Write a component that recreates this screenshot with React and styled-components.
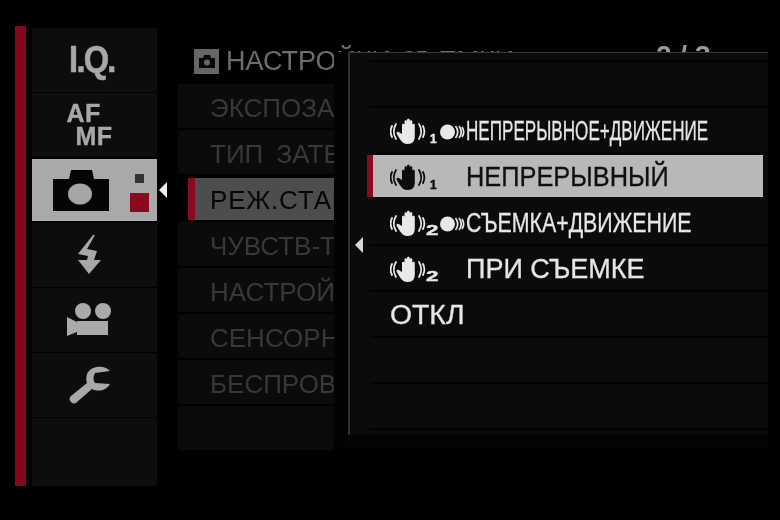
import React from 'react';
import styled, { createGlobalStyle } from 'styled-components';

const MENU = ['ЭКСПОЗАМЕР', 'ТИП ЗАТВОРА', 'РЕЖ.СТАБИЛИЗАТОРА', 'ЧУВСТВ-ТЬ', 'НАСТРОЙКА', 'СЕНСОРНЫЙ', 'БЕСПРОВОДНОЙ', ''];

const MODES = [
  {},
  { num: '1', subject: true, label: 'НЕПРЕРЫВНОЕ+ДВИЖЕНИЕ', scale: 0.633 },
  { num: '1', label: 'НЕПРЕРЫВНЫЙ', selected: true, scale: 0.94 },
  { num: '2', subject: true, label: 'СЪЕМКА+ДВИЖЕНИЕ', scale: 0.79 },
  { num: '2', label: 'ПРИ СЪЕМКЕ', scale: 1 },
  { label: 'ОТКЛ', plain: true, scale: 1.05 },
  {},
  {},
];

const App = () => {
  return (
    <Screen>
      <GlobalStyle />
      <RedBar />
      <Sidebar>
        <Tab><IQ>I.Q.</IQ></Tab>
        <Tab>
          <AfMf>
            <span>AF</span>
            <MfLine>MF</MfLine>
          </AfMf>
        </Tab>
        <Tab $active>
          <CameraIcon />
          <TabMarks>
            <SmallMark />
            <RedMark />
          </TabMarks>
          <TabArrow />
        </Tab>
        <Tab><FlashIcon /></Tab>
        <Tab><VideoIcon /></Tab>
        <Tab><WrenchIcon /></Tab>
        <Tab $last />
      </Sidebar>
      <Main>
        <TitleRow>
          <TitleIcon />
          <Title>НАСТРОЙКИ СЪЕМКИ</Title>
          <PageNo>2 / 3</PageNo>
        </TitleRow>
        <MenuList>
          {MENU.map((item, i) => (
            <MenuRow key={i} $selected={i === 2}>
              {item}
            </MenuRow>
          ))}
        </MenuList>
      </Main>
      <Popup>
        <PopupArrow />
        <PopupList>
          {MODES.map((m, i) => (
            <ModeRow key={i} $selected={m.selected}>
              {m.num && (
                <IconSlot>
                  <HandIcon color={m.selected ? '#0c0c0c' : '#e8e8e8'} />
                  <Sub $two={m.num === '2'} $selected={m.selected}>{m.num}</Sub>
                  {m.subject && <SubjectIcon />}
                </IconSlot>
              )}
              {m.label && (
                <ModeLabel $selected={m.selected} $scale={m.scale}>
                  {m.label}
                </ModeLabel>
              )}
            </ModeRow>
          ))}
        </PopupList>
      </Popup>
    </Screen>
  );
};

export default App;

const CameraIcon = () => (
  <svg width="56" height="41" viewBox="0 0 56 41">
    <path d="M0 9h16l2-9h21l2 9h15v32H0z" fill="#050505" />
    <ellipse cx="27" cy="24" rx="12" ry="10.500" fill="#a6a6a6" />
  </svg>
);

const TitleCamera = () => (
  <svg width="16" height="13" viewBox="0 0 16 13">
    <path d="M0 3h4l1-3h6l1 3h4v10H0z" fill="#0a0a0a" />
    <circle cx="8" cy="7.500" r="3" fill="#666" />
  </svg>
);

const TitleIcon = () => (
  <TitleIconBox>
    <TitleCamera />
  </TitleIconBox>
);

const FlashIcon = () => (
  <svg width="24" height="40" viewBox="0 0 24 40">
    <path d="M15 0L0 19l10 2-1 4H0l11 14 12-14h-7l3-9-10-2 8-14z" fill="#a8a8a8" />
  </svg>
);

const VideoIcon = () => (
  <svg width="45" height="34" viewBox="0 0 45 34">
    <circle cx="16" cy="8" r="8" fill="#aaa" />
    <circle cx="36" cy="8" r="8" fill="#aaa" />
    <path d="M10 18h31v14H10v-3L0 33V14l10 5z" fill="#aaa" />
  </svg>
);

const WrenchIcon = () => (
  <svg width="42" height="38" viewBox="0 0 42 38">
    <path
      d="M41 5C36-1 22-1 18 8c-1 4-1 6 0 9L2 30c-2 2-2 4 0 6s4 2 6 0l15-13c6 3 14 2 18-5l-15-1c-2-3-2-6 0-10z"
      fill="#a8a8a8"
    />
  </svg>
);

const HandIcon = ({ color }) => (
  <svg width="36" height="27" viewBox="0 0 36 27">
    <g fill="none" stroke={color} strokeWidth="1.800" strokeLinecap="round">
      <path d="M6 6c-3 5-3 10 0 15" />
      <path d="M2 8c-2 4-2 7 0 11" />
      <path d="M29 6c3 5 3 10 0 15" />
      <path d="M33 8c2 4 2 7 0 11" />
    </g>
    <path
      transform="translate(4 0)"
      d="M8 16V7c0-1.600 2.500-1.600 2.500 0v5-8.500c0-1.600 2.500-1.600 2.500 0V12V2c0-1.600 2.800-1.600 2.800 0v10-8.500c0-1.600 2.500-1.600 2.500 0V13V7c0-1.600 2.500-1.600 2.500 0v11c0 5-2 8-7 8-4 0-6-2-8-5l-3-5c-1-2 1-3 2.700-1.500z"
      fill={color}
    />
  </svg>
);

const SubjectIcon = () => (
  <SubjectSvg width="26" height="16" viewBox="0 0 26 16">
    <circle cx="7.500" cy="8" r="7.500" fill="#e8e8e8" />
    <g fill="none" stroke="#e8e8e8" strokeWidth="1.700">
      <path d="M15.500 2c3 4 3 8 0 12" />
      <path d="M19 2c3 4 3 8 0 12" />
      <path d="M22 3c2 3 2 7 0 10" />
    </g>
  </SubjectSvg>
);

const GlobalStyle = createGlobalStyle`
  html, body {
    margin: 0;
    padding: 0;
    background: #000;
  }
  body {
    font-family: "Liberation Sans", Arial, sans-serif;
  }
`;

const Screen = styled.div`
  position: relative;
  display: flex;
  align-items: flex-start;
  width: 780px;
  height: 520px;
  padding-left: 15px;
  box-sizing: border-box;
  overflow: hidden;
  background: #010101;
  filter: blur(0.5px);
`;

const RedBar = styled.div`
  flex: none;
  width: 11px;
  height: 460px;
  margin-top: 26px;
  background: #85061f;
`;

const Sidebar = styled.div`
  flex: none;
  display: flex;
  flex-direction: column;
  gap: 1px;
  width: 125px;
  height: 458px;
  margin: 28px 0 0 6px;
`;

const Tab = styled.div`
  position: relative;
  flex: ${(p) => (p.$last ? '1' : 'none')};
  display: flex;
  align-items: center;
  justify-content: center;
  box-sizing: border-box;
  height: ${(p) => (p.$active ? '62px' : p.$last ? 'auto' : '64px')};
  margin: ${(p) => (p.$active ? '1px 0' : '0')};
  padding-right: ${(p) => (p.$active ? '28px' : '10px')};
  background: ${(p) => (p.$active ? '#a9a9a9' : '#0d0d0d')};
`;

const IQ = styled.div`
  margin-left: 4px;
  font-size: 37px;
  font-weight: 700;
  color: #a8a8a8;
  letter-spacing: -2px;
  -webkit-text-stroke: 0.6px #a8a8a8;
  transform: scaleX(0.88);
`;

const AfMf = styled.div`
  display: flex;
  flex-direction: column;
  font-size: 25px;
  font-weight: 700;
  line-height: 23px;
  letter-spacing: 0.5px;
  color: #a8a8a8;
  -webkit-text-stroke: 0.4px #a8a8a8;
`;

const MfLine = styled.span`
  margin-left: 9px;
`;

const TabMarks = styled.div`
  position: absolute;
  top: 15px;
  right: 8px;
  display: flex;
  flex-direction: column;
  align-items: center;
  gap: 10px;
`;

const SmallMark = styled.div`
  width: 9px;
  height: 9px;
  background: #333;
`;

const RedMark = styled.div`
  width: 19px;
  height: 19px;
  background: #8b0a20;
`;

const TabArrow = styled.div`
  position: absolute;
  right: -10px;
  top: 23px;
  border-style: solid;
  border-width: 8px 8px 8px 0;
  border-color: transparent #eee transparent transparent;
`;

const Main = styled.div`
  flex: none;
  display: flex;
  flex-direction: column;
  width: 300px;
  margin: 43px 0 0 21px;
`;

const TitleRow = styled.div`
  position: relative;
  display: flex;
  align-items: center;
  gap: 7px;
  height: 36px;
  padding-left: 16px;
  margin-bottom: 5px;
  white-space: nowrap;
`;

const TitleIconBox = styled.div`
  display: flex;
  align-items: center;
  justify-content: center;
  flex: none;
  width: 25px;
  height: 25px;
  background: #666;
`;

const Title = styled.div`
  font-size: 27px;
  color: #6e6e6e;
`;

const PageNo = styled.div`
  position: absolute;
  left: 478px;
  top: -3px;
  font-size: 28px;
  font-weight: 700;
  color: #9a9a9a;
`;

const MenuList = styled.div`
  display: flex;
  flex-direction: column;
  gap: 2px;
  width: 156px;
  overflow: hidden;
`;

const MenuRow = styled.div`
  box-sizing: border-box;
  height: ${(p) => (p.$selected ? '42px' : '44px')};
  padding-left: ${(p) => (p.$selected ? '15px' : '32px')};
  margin: ${(p) => (p.$selected ? '2px 0 0 10px' : '0')};
  width: ${(p) => (p.$selected ? '146px' : '156px')};
  border-left: ${(p) => (p.$selected ? '7px solid #8b0a22' : 'none')};
  background: ${(p) => (p.$selected ? '#4d4d4d' : '#0b0b0b')};
  color: ${(p) => (p.$selected ? '#060606' : '#383838')};
  font-size: 26px;
  word-spacing: 6px;
  letter-spacing: ${(p) => (p.$selected ? '0.8px' : '0')};
  line-height: ${(p) => (p.$selected ? '44px' : '48px')};
  white-space: nowrap;
  overflow: hidden;
`;

const Popup = styled.div`
  position: absolute;
  left: 334px;
  top: 52px;
  box-sizing: border-box;
  width: 434px;
  height: 395px;
  padding: 8px 0 0 36px;
  background: #0b0b0b;
  box-shadow: inset 14px 0 0 #030303, inset 0 1px 0 #3a3a3a, inset 0 -12px 0 #040404;

  &::before {
    content: '';
    position: absolute;
    left: 14px;
    top: 1px;
    bottom: 12px;
    width: 1.5px;
    background: #303030;
  }
`;

const PopupArrow = styled.div`
  position: absolute;
  left: 21px;
  top: 185px;
  border-style: solid;
  border-width: 8px 8px 8px 0;
  border-color: transparent #d8d8d8 transparent transparent;
`;

const PopupList = styled.div`
  display: flex;
  flex-direction: column;
  border-top: 2px solid #030303;
`;

const ModeRow = styled.div`
  position: relative;
  display: flex;
  align-items: center;
  box-sizing: border-box;
  height: 46px;
  padding: 3px 0 0 20px;
  border-bottom: 2px solid #030303;
  white-space: nowrap;
  ${(p) =>
    p.$selected &&
    `
    height: 42px;
    padding-top: 2px;
    margin: 1px 5px 3px 0;
    border-bottom: none;
    background: #b8b8b8;
    &::before {
      content: '';
      position: absolute;
      left: -3px;
      top: 0;
      bottom: 0;
      width: 6px;
      background: #8b0a22;
    }
  `}
`;

const IconSlot = styled.div`
  position: relative;
  display: flex;
  align-items: center;
  flex: none;
  width: 76px;
`;

const SubjectSvg = styled.svg`
  flex: none;
  margin-left: 14px;
`;

const Sub = styled.span`
  position: absolute;
  left: ${(p) => (p.$two ? '36px' : '40px')};
  top: ${(p) => (p.$two ? '13px' : '15px')};
  font-size: ${(p) => (p.$two ? '14px' : '12px')};
  line-height: 1;
  font-weight: 700;
  color: ${(p) => (p.$selected ? '#0c0c0c' : '#e8e8e8')};
  -webkit-text-stroke: 0.4px currentColor;
  transform-origin: left center;
  transform: ${(p) => (p.$two ? 'scaleX(1.6)' : 'none')};
`;

const ModeLabel = styled.div`
  font-size: 27px;
  color: ${(p) => (p.$selected ? '#101010' : '#e6e6e6')};
  -webkit-text-stroke: 0.3px currentColor;
  transform-origin: left center;
  transform: scaleX(${(p) => p.$scale});
`;
